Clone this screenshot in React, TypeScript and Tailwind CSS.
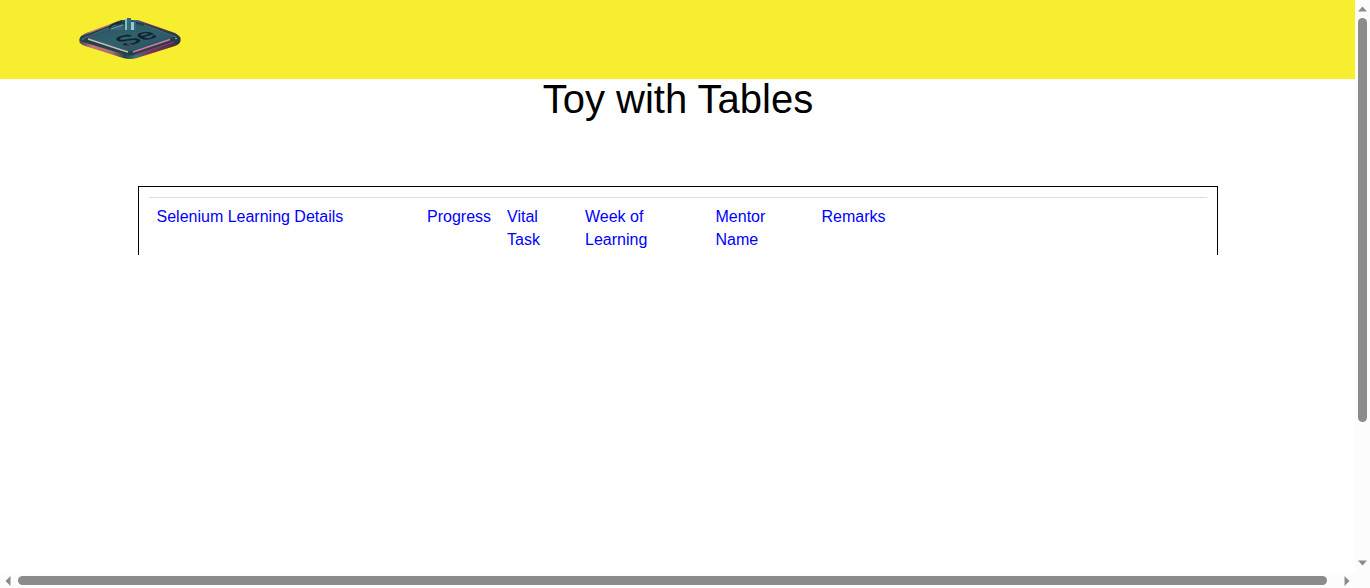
const columns = [
  { label: "Selenium Learning Details", width: "w-[270px]", padding: "pl-[7.5px] pr-2" },
  { label: "Progress", width: "w-20", padding: "px-2" },
  { label: "Vital Task", width: "w-[78px]", padding: "px-2" },
  { label: "Week of Learning", width: "w-[130.5px]", padding: "px-2" },
  { label: "Mentor Name", width: "w-[106px]", padding: "px-2" },
  { label: "Remarks", width: "w-[120px]", padding: "px-2" },
];

function Logo() {
  return (
    <svg viewBox="0 0 104 44" className="h-11 w-[104px]">
      <defs>
        <linearGradient id="edge" x1="0" x2="1" y1="0" y2="0">
          <stop offset="0" stopColor="#34454e" />
          <stop offset="0.12" stopColor="#c9727d" />
          <stop offset="0.32" stopColor="#a96f72" />
          <stop offset="0.45" stopColor="#1e4650" />
          <stop offset="0.56" stopColor="#3a7480" />
          <stop offset="0.68" stopColor="#7c3358" />
          <stop offset="0.88" stopColor="#602d4d" />
          <stop offset="1" stopColor="#27343f" />
        </linearGradient>
        <linearGradient id="plate" x1="0" x2="1" y1="0" y2="1">
          <stop offset="0" stopColor="#2a525d" />
          <stop offset="0.5" stopColor="#30616d" />
          <stop offset="1" stopColor="#284f5a" />
        </linearGradient>
      </defs>
      <path d="M3 20Q1 22 1.5 26Q2 28 7 30L45 42Q52 44 59 42L97 30Q102 28 102.5 25V22Q102 20 97 17L60 4H43L8 17Z" fill="url(#edge)" />
      <path d="M4 20L36 8Q44 5 52 5Q60 5 68 8L99 19Q104 22 99 25L59 38Q52 41 45 38L5 26Q0 23 4 20Z" fill="#253f48" />
      <path d="M6 22L38 9M66 9L98 21" fill="none" stroke="#59858b" strokeWidth=".8" />
      <path d="M10 20L41 9Q52 6 63 9L93 19Q96 21 92 23L58 34Q52 36 46 34L11 23Q8 22 10 20Z" fill="url(#plate)" />
      <path d="M10 23L45 34.5L50 36" fill="none" stroke="#c6beb6" strokeWidth="1.4" />
      <path d="M55 36L92 23.5" fill="none" stroke="#d779a6" strokeWidth="1.5" />
      <path d="M57 39L96 26" fill="none" stroke="#8a3e68" strokeWidth="1.2" />
      <path d="M31 12Q34 7 44 6" fill="none" stroke="#132d35" strokeWidth="1.8" />
      <path d="M33 13L45 8V14H33Z" fill="#376573" />
      <path d="M33 13L45 9" fill="none" stroke="#79aeba" strokeWidth=".8" />
      <path d="M47 3H49V14H47Z" fill="#82bdcb" />
      <path d="M49 2H53V14H49Z" fill="#356b7a" />
      <path d="M53 6H56V14H53Z" fill="#91cbd8" />
      <path d="M56 6H58V14H56Z" fill="#386875" />
      <g transform="matrix(1 -.3 .65 .4 46.8 30.7)">
        <text x="0" y="0" fontSize="28" fontWeight="400" fontFamily="Liberation Sans, sans-serif" fill="#10232d" stroke="#10232d" strokeWidth=".6">Se</text>
      </g>
      <path d="M49 28.5L54 29" fill="none" stroke="#a14f7f" strokeWidth=".8" />
      <circle cx="5" cy="23" r=".8" fill="#79a4a5" />
      <circle cx="98" cy="22.5" r=".8" fill="#9ac5cb" />
    </svg>
  );
}

function Arrow({ direction }: { direction: "up" | "down" | "left" | "right" }) {
  const paths = {
    up: "M4.5 .5L9 5.5H0Z",
    down: "M0 .5H9L4.5 5.5Z",
    left: "M5.5 0V10L.5 5Z",
    right: "M.5 0L5.5 5L.5 10Z",
  };
  const vertical = direction === "up" || direction === "down";
  return (
    <svg viewBox={vertical ? "0 0 9 6" : "0 0 6 10"} className={vertical ? "h-1.5 w-[9px]" : "h-2.5 w-1.5"} aria-hidden="true">
      <path d={paths[direction]} fill="#8b8b8b" />
    </svg>
  );
}

export default function App() {
  return (
    <div className="grid h-[588px] w-[1370px] grid-cols-[1355px_15px] grid-rows-[573px_15px] overflow-hidden bg-white font-['Liberation_Sans',Arial,sans-serif]">
      <div className="overflow-hidden">
        <header className="flex h-[79px] items-start bg-[#f8ee30] pt-4 pl-[78px]">
          <Logo />
        </header>
        <main>
          <h1 className="h-[107px] pl-px text-center text-[40px] leading-[41px] font-normal text-black">Toy with Tables</h1>
          <section className="ml-[138px] h-[69px] w-[1080px] overflow-hidden border border-b-0 border-black p-2.5">
            <table className="w-full table-fixed border-collapse border-t border-[#ddd]">
              <thead>
                <tr>
                  {columns.map((column) => (
                    <th key={column.label} className={`${column.width} ${column.padding} pt-[7px] text-left align-top text-base leading-[23px] font-normal text-[#0000ff]`}>
                      {column.label}
                    </th>
                  ))}
                  <th />
                </tr>
              </thead>
            </table>
          </section>
        </main>
      </div>
      <div className="flex flex-col items-center bg-[#fcfcfc]">
        <div className="flex h-[18px] shrink-0 items-start pt-[5.5px]"><Arrow direction="up" /></div>
        <div className="h-[404px] w-[9px] shrink-0 rounded-full bg-[#8b8b8b]" />
        <div className="mt-auto pb-[7px]"><Arrow direction="down" /></div>
      </div>
      <div className="flex items-center bg-[#fcfcfc]">
        <div className="w-[18px] shrink-0 pl-[4.5px]"><Arrow direction="left" /></div>
        <div className="h-[9px] w-[1309px] shrink-0 rounded-full bg-[#8b8b8b]" />
        <div className="ml-auto pr-[5px]"><Arrow direction="right" /></div>
      </div>
      <div className="bg-[#fcfcfc]" />
    </div>
  );
}
